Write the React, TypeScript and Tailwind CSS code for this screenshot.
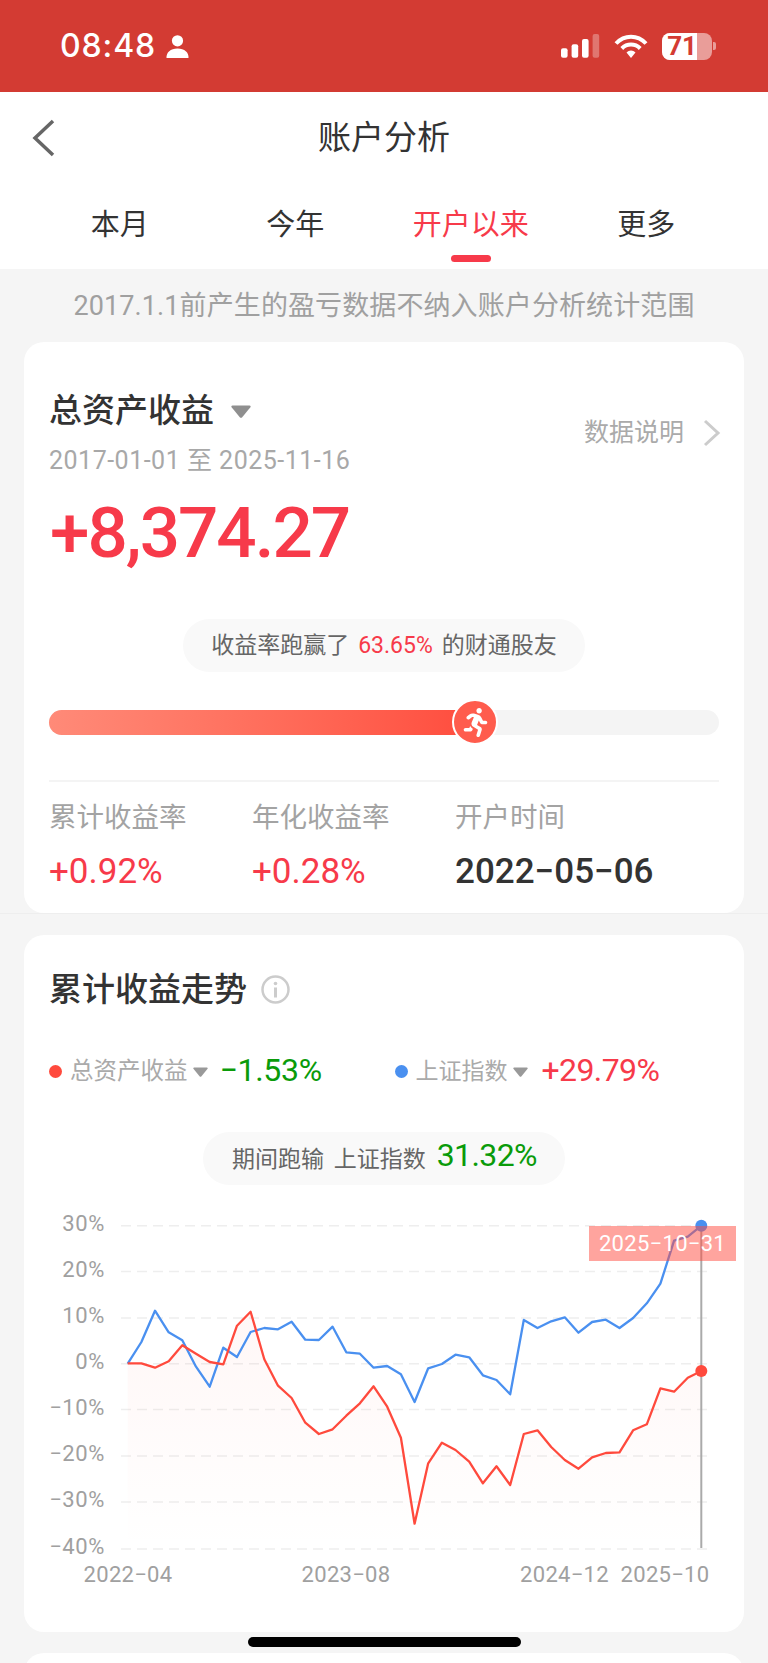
import { FaRunning } from 'react-icons/fa';

// Chart points are [x, y] in page pixels, read off the reference
const STEP = 13.66;
const START_X = 127.7;

const blueY = [
  1363.7, 1342, 1310.7, 1332.3, 1340.3, 1366.7, 1386.7, 1347.7, 1357, 1332, 1328, 1329.3, 1321.7, 1339.7, 1340, 1326.7,
  1352.3, 1353.7, 1367.7, 1366, 1374.3, 1402, 1368.3, 1364, 1354.7, 1357.3, 1375.3, 1380, 1394.3, 1320, 1328, 1321.3,
  1317.3, 1332.7, 1322, 1319.7, 1328, 1318, 1303.3, 1283.7, 1240.7, 1236.7, 1225.7,
];

const redY = [
  1363.3, 1363.3, 1367.7, 1361.3, 1345.3, 1353.7, 1362, 1364.3, 1325.7, 1311.7, 1359.3, 1385.7, 1398, 1422.7, 1434, 1429.3,
  1415.7, 1403.3, 1386.3, 1406.7, 1437.7, 1523.7, 1463.3, 1442.7, 1450, 1461.7, 1483.3, 1466.3, 1485, 1434, 1430.3, 1447,
  1460, 1468.7, 1457.3, 1453, 1452.3, 1430.3, 1424.3, 1388.3, 1391.7, 1377.7, 1371,
];

const toPoints = (ys: number[]) => ys.map((y, i) => `${(START_X + i * STEP).toFixed(1)},${y}`).join(' ');
const redArea = `${START_X},1549 ${toPoints(redY)} ${START_X + (redY.length - 1) * STEP},1549`;

const gridRows = [
  { label: '30%', y: 1225.7 },
  { label: '20%', y: 1271.6 },
  { label: '10%', y: 1318 },
  { label: '0%', y: 1363.7 },
  { label: '−10%', y: 1409.5 },
  { label: '−20%', y: 1456 },
  { label: '−30%', y: 1502 },
  { label: '−40%', y: 1549 },
];

const xLabels = [
  { label: '2022−04', x: 128 },
  { label: '2023−08', x: 346 },
  { label: '2024−12', x: 564.5 },
  { label: '2025−10', x: 665 },
];

function StatusBar() {
  return (
    <div className="flex h-[92px] items-center justify-between bg-[#d33b33] pl-[60px] pr-[52px] text-white">
      <div className="flex items-center gap-[10px]">
        <span className="font-[Inter,sans-serif] text-[32px] leading-none font-medium tracking-[0.9px]">08:48</span>
        <svg width="23" height="23" viewBox="0 0 23 23" fill="white">
          <circle cx="11.5" cy="5.8" r="5.6" />
          <path d="M0.5 23c-.4-5.8 4-9.6 11-9.6s11.400 3.800 11 9.600z" />
        </svg>
      </div>
      <div className="flex items-center">
        <svg width="39" height="24" viewBox="0 0 39 24" fill="white" className="mr-[14px]">
          <rect x="0" y="14.300" width="6.600" height="9.400" rx="2" />
          <rect x="10.600" y="10.300" width="6.600" height="13.400" rx="2" />
          <rect x="21" y="5" width="6.600" height="18.700" rx="2" />
          <rect x="31.600" y="0" width="6.600" height="23.700" rx="2" opacity="0.3" />
        </svg>
        <svg width="34" height="24" viewBox="0 0 34 24" fill="none" stroke="white" className="mr-[14px]">
          <path d="M2 9.500C10.500 0.500 23.500 0.500 32 9.500" strokeWidth="4" />
          <path d="M7.800 14.500C13 9.300 21 9.300 26.200 14.500" strokeWidth="4" />
          <path d="M12.500 18.500L17 24L21.500 18.500C19 15.800 15 15.800 12.500 18.500Z" fill="white" stroke="none" />
        </svg>
        <div className="flex h-[27px] w-[50px] items-center rounded-[8px] bg-white/50">
          <div className="flex h-full w-[35px] items-center justify-end rounded-l-[8px] bg-white font-[Roboto,sans-serif] text-[26px] leading-none font-bold text-[#d33b33]">
            71
          </div>
        </div>
        <div className="ml-[1px] h-[8px] w-[3px] rounded-r-[2px] bg-white/50" />
      </div>
    </div>
  );
}

function Triangle({ className }: { className: string }) {
  return (
    <svg viewBox="0 0 20 13" className={className}>
      <path d="M1.500 0.500H18.500C19.500 0.500 20 1.500 19.400 2.300L11 12.400C10.500 13 9.500 13 9 12.400L0.600 2.300C0 1.500 0.500 0.500 1.500 0.500Z" />
    </svg>
  );
}

function Chart() {
  return (
    <div className="relative h-[447px]">
      <svg width="720" height="447" viewBox="24 1185 720 447" className="block">
        <defs>
          <linearGradient id="redFill" x1="0" y1="0" x2="0" y2="1">
            <stop offset="0" stopColor="#ff4a3d" stopOpacity="0.045" />
            <stop offset="1" stopColor="#ff4a3d" stopOpacity="0" />
          </linearGradient>
        </defs>

        {gridRows.map((row) => (
          <g key={row.label}>
            <line x1="121" x2="708" y1={row.y} y2={row.y} stroke="#eeeeee" strokeWidth="1.500" strokeDasharray="10 6" />
            <text x="105" y={row.y + 5} textAnchor="end" fontSize="22" letterSpacing="0.6" fill="#a0a0a0">
              {row.label}
            </text>
          </g>
        ))}

        {xLabels.map((item) => (
          <text key={item.label} x={item.x} y="1582" textAnchor="middle" fontSize="22" letterSpacing="0.3" fill="#a0a0a0">
            {item.label}
          </text>
        ))}

        <polygon points={redArea} fill="url(#redFill)" />
        <polyline points={toPoints(blueY)} fill="none" stroke="#4a90f0" strokeWidth="2.300" strokeLinejoin="round" />
        <polyline points={toPoints(redY)} fill="none" stroke="#ff4a3d" strokeWidth="2.300" strokeLinejoin="round" />
        <line x1="701.300" x2="701.300" y1="1226" y2="1548" stroke="#aaaaaa" strokeWidth="2" />
        <circle cx="701.300" cy="1225.700" r="6" fill="#4a90f0" />
        <circle cx="701.300" cy="1371" r="6" fill="#ff4a3d" />
      </svg>

      {/* date tooltip sits over the lines */}
      <div className="absolute top-[41px] left-[565px] flex h-[35px] w-[147px] items-center justify-center bg-[#ff4a3d]/50 text-[22px] leading-none tracking-[0.3px] text-white">
        2025−10−31
      </div>
    </div>
  );
}

export default function App() {
  return (
    <div className="relative h-[1663px] w-[768px] overflow-hidden bg-[#f5f5f5] font-[Roboto,'Noto_Sans_CJK_SC',sans-serif]">
      <StatusBar />

      {/* Nav + tabs */}
      <div className="h-[177px] bg-white">
        <div className="relative flex h-[90px] items-center justify-center">
          <svg width="24" height="38" viewBox="0 0 24 38" fill="none" className="absolute top-[27px] left-[32px]">
            <path d="M21 2L3 19L21 36" stroke="#666666" strokeWidth="3.500" />
          </svg>
          <span className="text-[33px] leading-none text-[#333333]">账户分析</span>
        </div>
        <div className="grid grid-cols-4 pt-[20px] pr-[34px] pl-[32px]">
          {['本月', '今年', '开户以来', '更多'].map((tab) => (
            <div key={tab} className="flex flex-col items-center">
              <span className={`h-[46px] text-[29px] leading-[46px] ${tab === '开户以来' ? 'text-[#f73a4a]' : 'text-[#333333]'}`}>
                {tab}
              </span>
              {tab === '开户以来' && <div className="mt-[7px] h-[7px] w-[40px] rounded-full bg-[#f73a4a]" />}
            </div>
          ))}
        </div>
      </div>

      <div className="flex h-[73px] items-center justify-center pt-[2px] text-[27px] leading-none tracking-[0.1px] text-[#a0a0a0]">
        2017.1.1前产生的盈亏数据不纳入账户分析统计范围
      </div>

      {/* Total return card */}
      <div className="mx-[24px] h-[571px] rounded-[20px] bg-white px-[25px] pt-[50px]">
        <div className="flex items-center justify-between">
          <div>
            <div className="flex h-[36px] items-center">
              <span className="text-[33px] leading-none font-medium text-[#333333]">总资产收益</span>
              <Triangle className="mt-[2px] ml-[17px] h-[13px] w-[20px] fill-[#8f8f8f]" />
            </div>
            <div className="mt-[21px] h-[24px] text-[25px] leading-[24px] tracking-[0.5px] text-[#a8a8a8]">2017-01-01 至 2025-11-16</div>
          </div>
          <div className="-mr-[2px] flex items-center">
            <span className="text-[25px] leading-none text-[#aaaaaa]">数据说明</span>
            <svg width="18" height="28" viewBox="0 0 18 28" fill="none" className="ml-[19px]">
              <path d="M2 2L15 14L2 26" stroke="#cccccc" strokeWidth="3" />
            </svg>
          </div>
        </div>

        <div className="mt-[20px] ml-[1px] h-[80px] text-[71px] leading-[80px] font-medium tracking-[-2px] text-[#f73a4a]">+8,374.27</div>

        <div className="mx-auto mt-[46px] flex h-[53px] w-fit items-center gap-[8px] rounded-full bg-[#f9f9f9] px-[28px] text-[23px] leading-none text-[#666666]">
          <span>收益率跑赢了</span>
          <span className="px-[1px] text-[#f73a4a]">63.65%</span>
          <span>的财通股友</span>
        </div>

        <div className="relative mt-[38px] h-[25px] rounded-full bg-[#f4f4f4]">
          <div className="h-full w-[410px] rounded-l-full bg-gradient-to-r from-[#ff8a78] to-[#ff4f40]" />
          <div className="absolute top-[-11px] left-[403px] flex h-[46px] w-[46px] items-center justify-center rounded-full border-2 border-white bg-[#ff5c4d]">
            <FaRunning className="text-[29px] text-white" />
          </div>
        </div>

        <div className="mt-[45px] h-[1.5px] bg-[#f4f4f4]" />

        <div className="mt-[18px] grid grid-cols-[203px_203px_1fr]">
          <div className="h-[36px] text-[27.5px] leading-[36px] text-[#a3a3a3]">累计收益率</div>
          <div className="h-[36px] text-[27.5px] leading-[36px] text-[#a3a3a3]">年化收益率</div>
          <div className="h-[36px] text-[27.5px] leading-[36px] text-[#a3a3a3]">开户时间</div>
          <div className="mt-[16px] h-[40px] text-[35px] leading-[40px] text-[#f73a4a]">+0.92%</div>
          <div className="mt-[16px] h-[40px] text-[35px] leading-[40px] text-[#f73a4a]">+0.28%</div>
          <div className="mt-[16px] h-[40px] text-[35px] leading-[40px] font-medium text-[#333333]">2022−05−06</div>
        </div>
      </div>

      <div className="h-[1px] bg-[#eeeeee]" />

      {/* Cumulative trend card */}
      <div className="mx-[24px] mt-[21px] h-[697px] rounded-[20px] bg-white">
        <div className="px-[25px] pt-[36px]">
          <div className="flex h-[36px] items-center">
            <span className="text-[33px] leading-none font-medium text-[#333333]">累计收益走势</span>
            <svg width="29" height="29" viewBox="0 0 29 29" fill="none" className="ml-[14px]">
              <circle cx="14.500" cy="14.500" r="13" stroke="#cccccc" strokeWidth="2.500" />
              <circle cx="14.500" cy="8.500" r="1.800" fill="#cccccc" />
              <rect x="13" y="12.500" width="3" height="10" fill="#cccccc" />
            </svg>
          </div>

          <div className="mt-[43px] flex h-[40px] items-center">
            <div className="mt-[2px] h-[13px] w-[13px] rounded-full bg-[#ff4a3d]" />
            <span className="mt-[3px] ml-[8px] text-[23.500px] leading-none text-[#aaaaaa]">总资产收益</span>
            <Triangle className="mt-[4px] ml-[5px] h-[10px] w-[15px] fill-[#999999]" />
            <span className="-mt-[1px] ml-[12px] w-[175px] text-[32px] leading-none tracking-[-0.3px] text-[#0a9b0a]">−1.53%</span>
            <div className="mt-[2px] h-[13px] w-[13px] rounded-full bg-[#4a90f0]" />
            <span className="mt-[3px] ml-[8px] text-[23px] leading-none text-[#aaaaaa]">上证指数</span>
            <Triangle className="mt-[4px] ml-[5px] h-[10px] w-[15px] fill-[#999999]" />
            <span className="-mt-[1px] ml-[14px] text-[32px] leading-none tracking-[-0.6px] text-[#f73a4a]">+29.79%</span>
          </div>

          <div className="mx-auto mt-[42px] flex h-[53px] w-[362px] items-center rounded-full bg-[#f9f9f9] pl-[29px] text-[23px] leading-none text-[#666666]">
            <span className="mt-[2px] [word-spacing:4px]">期间跑输 上证指数</span>
            <span className="mb-[7px] ml-[11px] text-[32px] tracking-[-0.6px] text-[#0a9b0a]">31.32%</span>
          </div>
        </div>
        <Chart />
      </div>

      <div className="mx-[24px] mt-[21px] h-[40px] rounded-[20px] bg-white" />

      {/* Home indicator */}
      <div className="absolute top-[1637px] left-[248px] h-[10px] w-[273px] rounded-full bg-black" />
    </div>
  );
}
